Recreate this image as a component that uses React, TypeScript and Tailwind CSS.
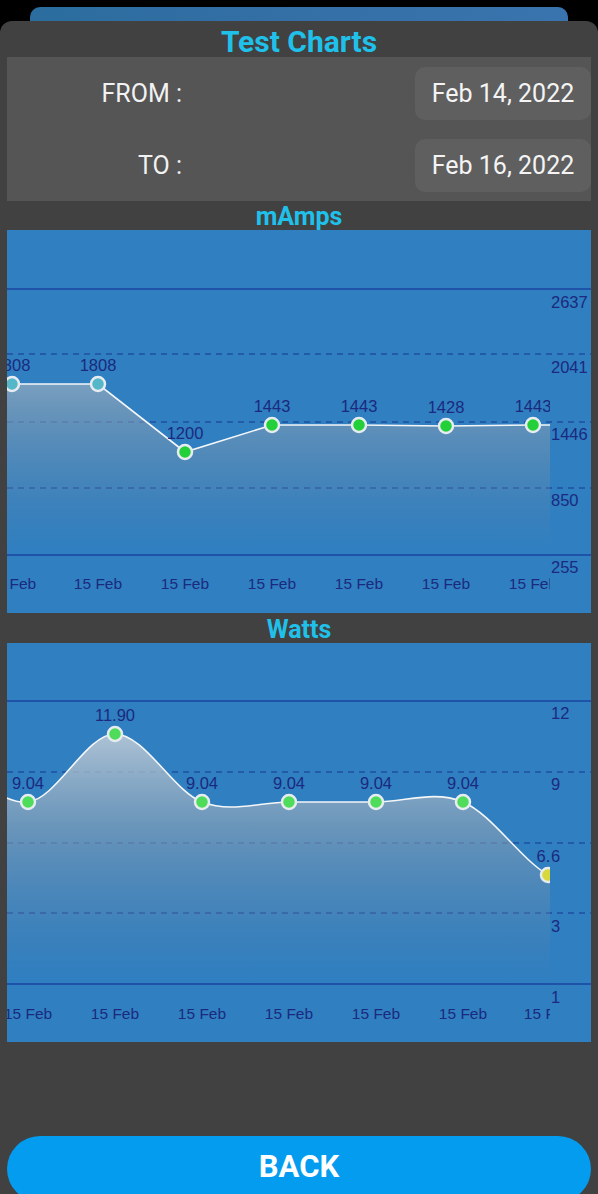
import React from 'react'

type Pt = { x: number; y: number; label?: string; color?: string; hidden?: boolean }

interface ChartProps {
  id: string
  height: number
  smooth: boolean
  pts: Pt[]
  grid: { y: number; solid: boolean }[]
  axis: { y: number; text: string }[]
  xLabelY: number
  xs: number[]
}

const W = 584
const PLOT_W = 543
const NAVY = '#1b2a7e'

// catmull-rom -> bezier
function smoothPath(p: Pt[]) {
  let d = `M${p[0].x},${p[0].y}`
  for (let i = 0; i < p.length - 1; i++) {
    const p0 = p[i - 1] || p[i]
    const p1 = p[i]
    const p2 = p[i + 1]
    const p3 = p[i + 2] || p2
    const c1x = p1.x + (p2.x - p0.x) / 6
    const c1y = p1.y + (p2.y - p0.y) / 6
    const c2x = p2.x - (p3.x - p1.x) / 6
    const c2y = p2.y - (p3.y - p1.y) / 6
    d += ` C${c1x},${c1y} ${c2x},${c2y} ${p2.x},${p2.y}`
  }
  return d
}

function linePath(p: Pt[]) {
  return p.map((q, i) => `${i ? 'L' : 'M'}${q.x},${q.y}`).join(' ')
}

function Chart({ id, height, smooth, pts, grid, axis, xLabelY, xs }: ChartProps) {
  const d = smooth ? smoothPath(pts) : linePath(pts)
  const top = grid[0].y
  const bottom = grid[grid.length - 1].y
  const fill = `${d} L${pts[pts.length - 1].x},${bottom} L${pts[0].x},${bottom} Z`

  return (
    <div className="bg-[#2f7fc1]" style={{ height }}>
      <svg width={W} height={height} className="block">
        <defs>
          <clipPath id={`${id}-clip`}>
            <rect x={0} y={0} width={PLOT_W} height={height} />
          </clipPath>
          <linearGradient id={`${id}-grad`} x1="0" y1={top} x2="0" y2={bottom} gradientUnits="userSpaceOnUse">
            <stop offset="0" stopColor="#d4dce4" stopOpacity="0.95" />
            <stop offset="0.45" stopColor="#8ca2b6" stopOpacity="0.62" />
            <stop offset="1" stopColor="#5f7f9f" stopOpacity="0" />
          </linearGradient>
        </defs>

        {grid.map((g) => (
          <line
            key={g.y}
            x1={0}
            x2={W}
            y1={g.y}
            y2={g.y}
            stroke={g.solid ? '#1a45a0' : '#1f50a2'}
            strokeWidth={g.solid ? 1.6 : 1.3}
            strokeDasharray={g.solid ? undefined : '6 5'}
          />
        ))}

        <g clipPath={`url(#${id}-clip)`}>
          <path d={fill} fill={`url(#${id}-grad)`} />
          <path d={d} fill="none" stroke="#f4f6f8" strokeWidth={1.6} />
          {pts
            .filter((p) => !p.hidden)
            .map((p, i) => (
              <g key={i}>
                <circle cx={p.x} cy={p.y} r={7} fill={p.color} stroke="#e6ecef" strokeWidth={2.5} />
                <text
                  x={p.x}
                  y={p.y - 17}
                  textAnchor="middle"
                  dominantBaseline="middle"
                  fontSize={16.5}
                  fill={NAVY}
                  fontFamily='"Liberation Sans", Arial, sans-serif'
                >
                  {p.label}
                </text>
              </g>
            ))}
          {xs.map((x, i) => (
            <text
              key={i}
              x={x}
              y={xLabelY + 3}
              textAnchor="middle"
              dominantBaseline="middle"
              fontSize={15.5}
              fill={NAVY}
              fontFamily='"Liberation Sans", Arial, sans-serif'
            >
              15 Feb
            </text>
          ))}
        </g>

        {axis.map((a) => (
          <text
            key={a.text}
            x={544}
            y={a.y + 3}
            dominantBaseline="middle"
            fontSize={16.5}
            fill={NAVY}
            fontFamily='"Liberation Sans", Arial, sans-serif'
          >
            {a.text}
          </text>
        ))}
      </svg>
    </div>
  )
}

const teal = '#56b7c9'
const green = '#24d03a'
const lightGreen = '#4fdc5a'

const ampsPts: Pt[] = [
  { x: -82, y: 154, hidden: true },
  { x: 5, y: 154, label: '1808', color: teal },
  { x: 91, y: 154, label: '1808', color: teal },
  { x: 178, y: 222, label: '1200', color: green },
  { x: 265, y: 195, label: '1443', color: green },
  { x: 352, y: 195, label: '1443', color: green },
  { x: 439, y: 196, label: '1428', color: green },
  { x: 526, y: 195, label: '1443', color: green },
  { x: 613, y: 195, hidden: true },
]

const wattsPts: Pt[] = [
  { x: -66, y: 110, hidden: true },
  { x: 21, y: 159, label: '9.04', color: lightGreen },
  { x: 108, y: 91, label: '11.90', color: lightGreen },
  { x: 195, y: 159, label: '9.04', color: lightGreen },
  { x: 282, y: 159, label: '9.04', color: lightGreen },
  { x: 369, y: 159, label: '9.04', color: lightGreen },
  { x: 456, y: 159, label: '9.04', color: lightGreen },
  { x: 541, y: 232, label: '6.6', color: '#d8d83a' },
  { x: 628, y: 262, hidden: true },
]

function DateRow({ label, value }: { label: string; value: string }) {
  return (
    <div className="flex items-center">
      <div className="w-[176px] pr-[1px] text-right text-[25px] leading-none text-[#f2f2f2]">{label}</div>
      <div className="flex-1" />
      <div className="flex h-[53px] w-[176px] items-center justify-center rounded-[10px] bg-[#5f5f5f] text-[25px] leading-none text-[#f4f4f4]">
        {value}
      </div>
    </div>
  )
}

export default function App() {
  return (
    <div className="h-[1194px] overflow-hidden bg-black font-['Roboto','Liberation_Sans',sans-serif]">
      <div className="px-[30px] pt-[7px]">
        <div className="h-[14px] rounded-t-[10px] bg-gradient-to-r from-[#2b6d9e] via-[#346fa6] to-[#3a74ae]" />
      </div>

      <div className="flex h-[1173px] flex-col rounded-t-[12px] bg-[#414141] px-[7px]">
        <div className="flex h-[36px] items-center justify-center pt-[6px] text-[30px] font-bold leading-none text-[#1fc1ea]">
          Test Charts
        </div>

        <div className="flex flex-col gap-[19px] bg-[#555555] pb-[9px] pt-[10px]">
          <DateRow label="FROM :" value="Feb 14, 2022" />
          <DateRow label="TO :" value="Feb 16, 2022" />
        </div>

        <div className="flex h-[29px] items-center justify-center pt-[2px] text-[25px] font-bold leading-none text-[#1fc1ea]">
          mAmps
        </div>
        <Chart
          id="amps"
          height={383}
          smooth={false}
          pts={ampsPts}
          grid={[
            { y: 59, solid: true },
            { y: 124, solid: false },
            { y: 192, solid: false },
            { y: 258, solid: false },
            { y: 325, solid: true },
          ]}
          axis={[
            { y: 71, text: '2637' },
            { y: 136, text: '2041' },
            { y: 203, text: '1446' },
            { y: 269, text: '850' },
            { y: 336, text: '255' },
          ]}
          xLabelY={352}
          xs={[5, 91, 178, 265, 352, 439, 526]}
        />

        <div className="flex h-[30px] items-center justify-center pt-[2px] text-[25px] font-bold leading-none text-[#1fc1ea]">
          Watts
        </div>
        <Chart
          id="watts"
          height={399}
          smooth
          pts={wattsPts}
          grid={[
            { y: 58, solid: true },
            { y: 129, solid: false },
            { y: 200, solid: false },
            { y: 270, solid: false },
            { y: 341, solid: true },
          ]}
          axis={[
            { y: 69, text: '12' },
            { y: 140, text: '9' },
            { y: 212, text: '6' },
            { y: 282, text: '3' },
            { y: 353, text: '1' },
          ]}
          xLabelY={369}
          xs={[21, 108, 195, 282, 369, 456, 541]}
        />

        <div className="flex-1" />

        <button className="mb-[-8px] flex h-[66px] w-full shrink-0 items-center justify-center rounded-full bg-[#049cef] pb-[6px] text-[31px] font-bold leading-none text-white">
          BACK
        </button>
      </div>
    </div>
  )
}
